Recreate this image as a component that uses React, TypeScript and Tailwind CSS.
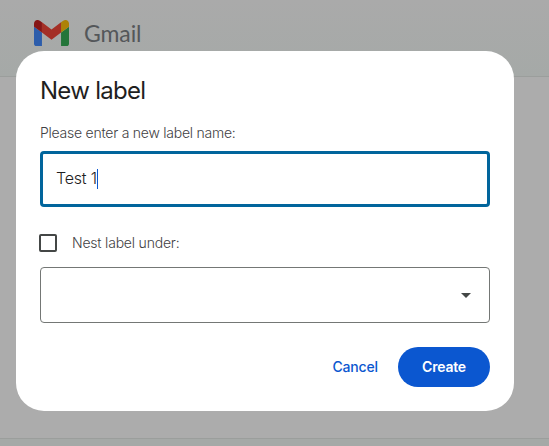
import React from "react";

function GmailLogo() {
  return (
    <svg className="h-[26px] w-[35px]" viewBox="52 42 88 66" preserveAspectRatio="none" aria-hidden="true">
      <path fill="#2d5dab" d="M58 108h14V74L52 59v43c0 3.32 2.69 6 6 6" />
      <path fill="#24753a" d="M120 108h14c3.32 0 6-2.69 6-6V59l-20 15" />
      <path fill="#ad8207" d="M120 48v26l20-15v-8c0-7.42-8.47-11.65-14.4-7.2" />
      <path fill="#a42f26" d="M72 74V48l24 18 24-18v26L96 92" />
      <path fill="#861515" d="M52 51v8l20 15V48l-5.6-4.2c-5.94-4.45-14.4-.22-14.4 7.2" />
    </svg>
  );
}

function TopBar() {
  return (
    <header className="flex h-[77px] shrink-0 items-start border-b border-[#9b9e9c] bg-linear-to-b from-[#aaaaaa] to-[#a5a9a7] pt-5 pl-[34px]">
      <GmailLogo />
      <span className="ml-[15px] font-['Lato',sans-serif] text-[23px] leading-[26px] tracking-[-0.1px] text-[#54575a]">Gmail</span>
    </header>
  );
}

function NewLabelDialog() {
  return (
    <section
      role="dialog"
      aria-label="New label"
      className="absolute top-[51px] left-4 flex h-[360px] w-[498px] flex-col rounded-[28px] bg-white px-6 pt-6 pb-6"
    >
      <h1 className="h-8 text-[24px] leading-8 font-normal tracking-[-0.72px] text-[#1f1f1f]">New label</h1>
      <p className="mt-4 h-5 text-sm leading-5 font-light tracking-[-0.24px] text-[#3f4143]">Please enter a new label name:</p>
      <div className="mt-2 flex h-14 items-center rounded border-3 border-[#01659c] pl-[13px]">
        <span className="-mt-0.5 text-base leading-6 font-light tracking-[-0.2px] text-[#1f1f1f]">Test 1</span>
        <span className="h-5 w-px bg-[#0b57d0]" />
      </div>
      <label className="mt-[26px] -ml-px flex h-5 items-center">
        <span className="size-[18px] rounded-[2px] border-2 border-[#444746]" />
        <span className="ml-[15px] text-sm leading-5 font-light tracking-[-0.2px] text-[#3f4143]">Nest label under:</span>
      </label>
      <div className="mt-[14px] flex h-14 items-center justify-end rounded border border-[#747775] pr-[18px]">
        <svg className="h-[5px] w-[10px]" viewBox="0 0 10 5" aria-hidden="true">
          <path d="M0 0h10L5 5z" fill="#444746" />
        </svg>
      </div>
      <footer className="mt-6 flex h-10 items-center justify-end gap-5 text-sm font-medium">
        <button className="tracking-[-0.15px] text-[#0b57d0]">Cancel</button>
        <button className="h-10 w-[92px] rounded-full bg-[#0b57d0] font-semibold tracking-[-0.2px] text-white">Create</button>
      </footer>
    </section>
  );
}

export default function App() {
  return (
    <main className="relative flex h-[446px] w-[549px] flex-col overflow-hidden bg-[#acacac] font-['Inter',sans-serif]">
      <TopBar />
      <div className="flex-1" />
      <div className="h-2 border-t border-[#9b9e9c] bg-[#a5a9a7]" />
      <NewLabelDialog />
    </main>
  );
}
